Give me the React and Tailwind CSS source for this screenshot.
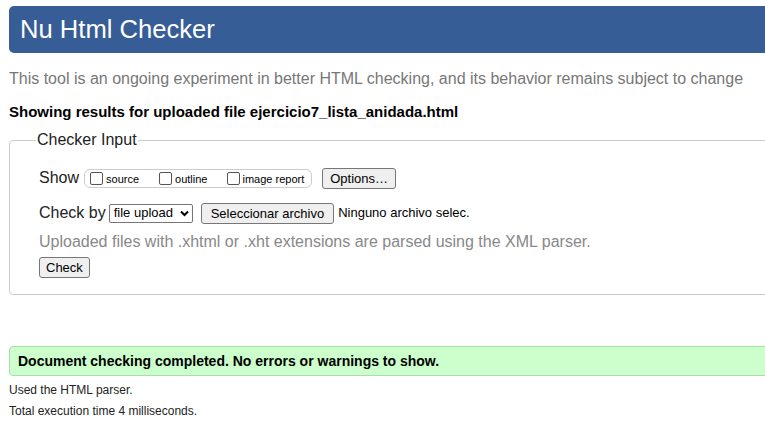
export default function App() {
  return (
    <div className="w-[765px] h-[426px] overflow-hidden bg-white font-['Liberation_Sans',Arial,sans-serif] text-black">
      <div className="w-[820px] pl-[9px] pt-[6px]">
        <h1 className="h-[47px] rounded-l-[5px] bg-[#365d95] pl-[11px] text-[25.6px] leading-[47px] text-white">
          Nu Html Checker
        </h1>
        <p className="mt-[16px] text-[16px] leading-[20px] text-[#777]">
          This tool is an ongoing experiment in better HTML checking, and its behavior remains subject to change
        </p>
        <p className="mt-[13px] text-[15px] font-bold leading-[20px]">
          Showing results for uploaded file ejercicio7_lista_anidada.html
        </p>

        <fieldset className="mt-[9px] h-[164px] rounded-[4px] border border-[#ccc] pl-[29px] pr-2">
          <legend className="ml-[-3px] px-px text-[16px] leading-[18px] text-[#222]">Checker Input</legend>

          <div className="mt-[17px] flex items-center">
            <span className="text-[16px] text-[#222]">Show</span>
            <div className="ml-[5px] flex h-[19px] items-center rounded-[6px] border border-[#ccc] pl-[5px] pr-[7px] text-[11px]">
              <label className="flex items-center">
                <span className="inline-block h-[13px] w-[13px] rounded-[2px] border border-[#555] bg-white"></span>
                <span className="ml-[3px] mt-[2px]">source</span>
              </label>
              <label className="ml-[20px] flex items-center">
                <span className="inline-block h-[13px] w-[13px] rounded-[2px] border border-[#555] bg-white"></span>
                <span className="ml-[3px] mt-[2px]">outline</span>
              </label>
              <label className="ml-[20px] flex items-center">
                <span className="inline-block h-[13px] w-[13px] rounded-[2px] border border-[#555] bg-white"></span>
                <span className="ml-[2px] mt-[2px]">image report</span>
              </label>
            </div>
            <button className="ml-[10px] h-[21px] rounded-[3px] border border-[#767676] bg-[#efefef] px-[7px] text-[13px] leading-[19px]">
              Options…
            </button>
          </div>

          <div className="mt-[11px] flex items-center">
            <span className="text-[16px] text-[#222]">Check by</span>
            <div className="ml-[3px] flex h-[19px] w-[84px] items-center justify-between rounded-[2px] border border-[#767676] pl-[4px] pr-[3px] text-[13px]">
              <span>file upload</span>
              <svg width="9" height="7" viewBox="0 0 9 7" className="mt-px">
                <path d="M1 1.5 L4.5 5 L8 1.5" fill="none" stroke="#000" strokeWidth="2" />
              </svg>
            </div>
            <button className="ml-[8px] h-[21px] rounded-[3px] border border-[#767676] bg-[#efefef] px-[9px] text-[13px] leading-[19px]">
              Seleccionar archivo
            </button>
            <span className="ml-[4px] text-[13px]">Ninguno archivo selec.</span>
          </div>

          <p className="mt-[7px] text-[16px] leading-[20px] text-[#888]">
            Uploaded files with .xhtml or .xht extensions are parsed using the XML parser.
          </p>

          <button className="mt-[5px] h-[21px] rounded-[3px] border border-[#767676] bg-[#efefef] px-[6px] text-[13px] leading-[19px]">
            Check
          </button>
        </fieldset>

        <div className="mt-[51px] h-[30px] rounded-l-[4px] border border-[#aadda8] bg-[#ccffcc] pl-[8px] text-[14px] font-bold leading-[28px]">
          Document checking completed. No errors or warnings to show.
        </div>
        <p className="mt-[6px] text-[12px] leading-[16px] text-[#222]">Used the HTML parser.</p>
        <p className="mt-[5px] text-[12px] leading-[16px] text-[#222]">Total execution time 4 milliseconds.</p>
      </div>
    </div>
  );
}
